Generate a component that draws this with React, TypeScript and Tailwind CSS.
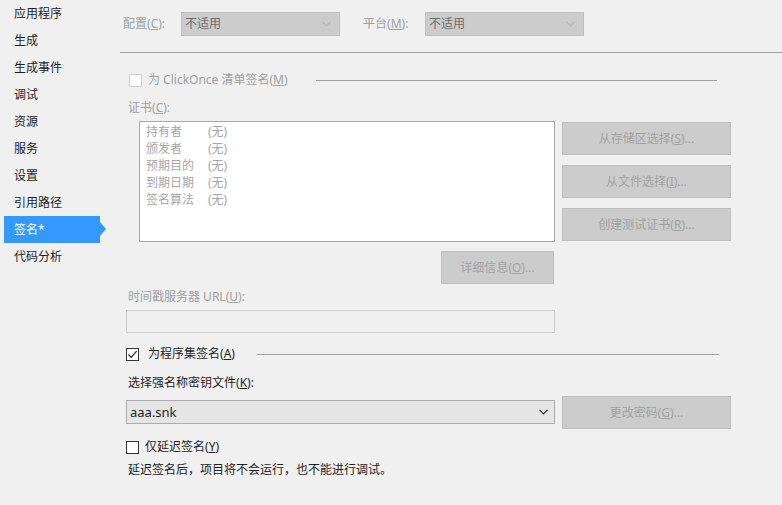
import React from "react";

const navItems = ["应用程序", "生成", "生成事件", "调试", "资源", "服务", "设置", "引用路径", "签名*", "代码分析"];
const certFields = [
  ["持有者", "(无)"],
  ["颁发者", "(无)"],
  ["预期目的", "(无)"],
  ["到期日期", "(无)"],
  ["签名算法", "(无)"],
];

function Chevron({ className }: { className: string }) {
  return (
    <svg width="9" height="6" viewBox="0 0 9 6" className={className}>
      <polyline points="0.5,0.8 4.5,4.8 8.5,0.8" fill="none" stroke="currentColor" strokeWidth="1.2" />
    </svg>
  );
}

function Acc({ label, k, tail = "" }: { label: string; k: string; tail?: string }) {
  return (
    <>
      {label}(<u>{k}</u>){tail}
    </>
  );
}

function DisabledSelect() {
  return (
    <div className="w-[159px] h-6 bg-[#cccccc] border border-[#bfbfbf] flex items-center justify-between pl-[3px] pr-[8px] text-[#6d6d6d]">
      <span>不适用</span>
      <Chevron className="text-[#b5b5b5]" />
    </div>
  );
}

function DisabledButton({ children, w }: { children: React.ReactNode; w: string }) {
  return (
    <div className={`${w} h-[33px] bg-[#cccccc] border border-[#bfbfbf] flex items-center justify-center text-[#a2a2a2]`}>
      {children}
    </div>
  );
}

function Checkbox({ checked, disabled }: { checked?: boolean; disabled?: boolean }) {
  return (
    <div
      className={`w-[13px] h-[13px] border bg-white flex items-center justify-center ${
        disabled ? "border-[#cfcfcf] bg-[#f3f3f3]" : "border-[#333333]"
      }`}
    >
      {checked && (
        <svg width="11" height="11" viewBox="0 0 11 11">
          <polyline points="1.5,5.5 4.3,8.3 9.6,2.2" fill="none" stroke="#222" strokeWidth="1.2" />
        </svg>
      )}
    </div>
  );
}

export default function App() {
  return (
    <div className="w-[782px] h-[505px] bg-[#f0f0f0] flex text-[12px] leading-4 font-['Noto_Sans','Noto_Sans_CJK_SC',sans-serif] text-[#1e1e1e] overflow-hidden">
      {/* project property pages */}
      <div className="w-[112px] shrink-0 flex flex-col">
        {navItems.map((item, i) =>
          i === 8 ? (
            <div key={item} className="relative h-[27px] ml-1 w-[96px] bg-[#3399ff] text-white flex items-center pl-[10px]">
              {item}
              <div className="absolute -right-[6px] top-[6px] w-0 h-0 border-y-[7px] border-y-transparent border-l-[6px] border-l-[#3399ff]" />
            </div>
          ) : (
            <div key={item} className="h-[27px] flex items-center pl-[14px]">
              {item}
            </div>
          )
        )}
      </div>

      <div className="flex-1 flex flex-col pt-3 text-[#a0a0a0]">
        {/* configuration / platform */}
        <div className="flex items-center h-6">
          <span className="ml-[11px] w-[58px]">
            <Acc label="配置" k="C" tail=":" />
          </span>
          <DisabledSelect />
          <span className="ml-[23px] w-[62px]">
            <Acc label="平台" k="M" tail=":" />
          </span>
          <DisabledSelect />
        </div>

        <div className="mt-4 ml-2 h-px bg-[#a0a0a0]" />

        {/* ClickOnce manifest */}
        <div className="mt-[19px] h-4 flex items-center">
          <div className="ml-[17px]">
            <Checkbox disabled />
          </div>
          <span className="ml-[6px]">
            为 ClickOnce 清单签名(<u>M</u>)
          </span>
          <div className="ml-[28px] mr-[65px] flex-1 h-px bg-[#a0a0a0]" />
        </div>

        <div className="mt-3 ml-4">
          <Acc label="证书" k="C" tail=":" />
        </div>

        <div className="mt-[5px] flex">
          <div className="ml-[27px] w-[416px] h-[121px] bg-white border border-[#a8a8a8] pt-[1px] pl-[6px]">
            {certFields.map(([k, v]) => (
              <div key={k} className="flex h-[17px] items-center text-[#a6a6a6]">
                <span className="w-[62px]">{k}</span>
                <span>{v}</span>
              </div>
            ))}
          </div>
          <div className="ml-[7px] mt-px flex flex-col gap-[10px]">
            <DisabledButton w="w-[169px]">
              <Acc label="从存储区选择" k="S" tail="..." />
            </DisabledButton>
            <DisabledButton w="w-[169px]">
              <Acc label="从文件选择" k="I" tail="..." />
            </DisabledButton>
            <DisabledButton w="w-[169px]">
              <Acc label="创建测试证书" k="R" tail="..." />
            </DisabledButton>
          </div>
        </div>

        <div className="mt-[9px] ml-[329px]">
          <DisabledButton w="w-[113px]">
            <Acc label="详细信息" k="O" tail="..." />
          </DisabledButton>
        </div>

        <div className="mt-[5px] ml-4">
          时间戳服务器 URL(<u>U</u>):
        </div>
        <div className="mt-[5px] ml-[14px] w-[429px] h-[23px] border border-[#cccccc] bg-[#f0f0f0]" />

        {/* strong name signing */}
        <div className="mt-[13px] h-4 flex items-center text-[#1e1e1e]">
          <div className="ml-[14px]">
            <Checkbox checked />
          </div>
          <span className="ml-[9px]">
            <Acc label="为程序集签名" k="A" />
          </span>
          <div className="ml-[22px] mr-[63px] flex-1 h-px bg-[#a0a0a0]" />
        </div>

        <div className="mt-[13px] ml-4 text-[#1e1e1e]">
          <Acc label="选择强名称密钥文件" k="K" tail=":" />
        </div>

        <div className="mt-[5px] flex items-start">
          <div className="ml-[14px] mt-1 w-[429px] h-6 bg-[#e5e5e5] border border-[#acacac] flex items-center justify-between pl-[3px] pr-[6px] text-[#1e1e1e]">
            <span className="text-[13px]">aaa.snk</span>
            <Chevron className="text-[#333]" />
          </div>
          <div className="ml-[7px]">
            <DisabledButton w="w-[169px]">
              <Acc label="更改密码" k="G" tail="..." />
            </DisabledButton>
          </div>
        </div>

        <div className="mt-[10px] h-4 flex items-center text-[#1e1e1e]">
          <div className="ml-[14px]">
            <Checkbox />
          </div>
          <span className="ml-[6px]">
            <Acc label="仅延迟签名" k="Y" />
          </span>
        </div>

        <div className="mt-[7px] ml-4 text-[#1e1e1e]">延迟签名后，项目将不会运行，也不能进行调试。</div>
      </div>
    </div>
  );
}
